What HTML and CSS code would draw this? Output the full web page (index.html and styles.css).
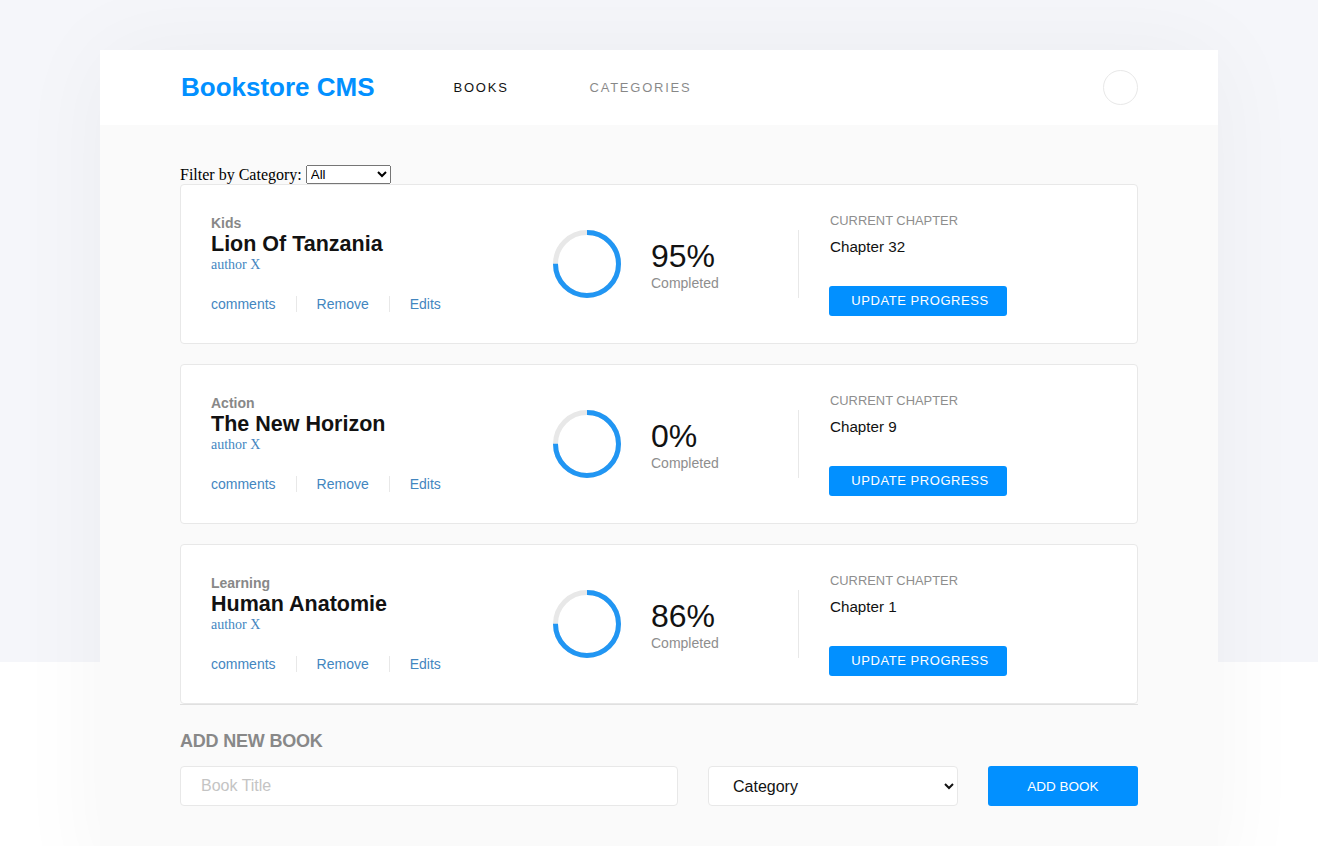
FILE: index.html
```html
<!DOCTYPE html>
<html lang="en">
<head>
<meta charset="utf-8">
<title>Bookstore CMS</title>
<link rel="stylesheet" href="styles.css">
</head>
<body>
<div class="page">
  <div class="panel">
    <header class="header">
      <h1 class="logo">Bookstore CMS</h1>
      <nav class="nav">
        <a class="nav-link active" href="#">BOOKS</a>
        <a class="nav-link" href="#">CATEGORIES</a>
      </nav>
      <div class="avatar"></div>
    </header>

    <main class="content">
      <div class="filter">
        <label class="filter-label" for="filter">Filter by Category:</label>
        <select id="filter" class="filter-select">
          <option>All</option>
          <option>Action</option>
          <option>Kids</option>
          <option>Learning</option>
        </select>
      </div>

      <ul class="book-list">
        <li class="book">
          <div class="book-info">
            <span class="book-category">Kids</span>
            <h2 class="book-title">Lion Of Tanzania</h2>
            <span class="book-author">author X</span>
            <div class="book-actions">
              <a class="action" href="#">comments</a>
              <a class="action" href="#">Remove</a>
              <a class="action" href="#">Edits</a>
            </div>
          </div>
          <div class="book-progress">
            <svg class="ring" width="68" height="68" viewBox="0 0 68 68">
              <circle class="ring-track" cx="34" cy="34" r="31.5"/>
              <circle class="ring-bar" cx="34" cy="34" r="31.5" stroke-dasharray="148.4 197.9"/>
            </svg>
            <div class="progress-text">
              <span class="percent">95%</span>
              <span class="completed">Completed</span>
            </div>
          </div>
          <div class="book-chapter">
            <span class="chapter-label">CURRENT CHAPTER</span>
            <span class="chapter-name">Chapter 32</span>
            <button class="btn btn-update">UPDATE PROGRESS</button>
          </div>
        </li>

        <li class="book">
          <div class="book-info">
            <span class="book-category">Action</span>
            <h2 class="book-title">The New Horizon</h2>
            <span class="book-author">author X</span>
            <div class="book-actions">
              <a class="action" href="#">comments</a>
              <a class="action" href="#">Remove</a>
              <a class="action" href="#">Edits</a>
            </div>
          </div>
          <div class="book-progress">
            <svg class="ring" width="68" height="68" viewBox="0 0 68 68">
              <circle class="ring-track" cx="34" cy="34" r="31.5"/>
              <circle class="ring-bar" cx="34" cy="34" r="31.5" stroke-dasharray="148.4 197.9"/>
            </svg>
            <div class="progress-text">
              <span class="percent">0%</span>
              <span class="completed">Completed</span>
            </div>
          </div>
          <div class="book-chapter">
            <span class="chapter-label">CURRENT CHAPTER</span>
            <span class="chapter-name">Chapter 9</span>
            <button class="btn btn-update">UPDATE PROGRESS</button>
          </div>
        </li>

        <li class="book">
          <div class="book-info">
            <span class="book-category">Learning</span>
            <h2 class="book-title">Human Anatomie</h2>
            <span class="book-author">author X</span>
            <div class="book-actions">
              <a class="action" href="#">comments</a>
              <a class="action" href="#">Remove</a>
              <a class="action" href="#">Edits</a>
            </div>
          </div>
          <div class="book-progress">
            <svg class="ring" width="68" height="68" viewBox="0 0 68 68">
              <circle class="ring-track" cx="34" cy="34" r="31.5"/>
              <circle class="ring-bar" cx="34" cy="34" r="31.5" stroke-dasharray="148.4 197.9"/>
            </svg>
            <div class="progress-text">
              <span class="percent">86%</span>
              <span class="completed">Completed</span>
            </div>
          </div>
          <div class="book-chapter">
            <span class="chapter-label">CURRENT CHAPTER</span>
            <span class="chapter-name">Chapter 1</span>
            <button class="btn btn-update">UPDATE PROGRESS</button>
          </div>
        </li>
      </ul>

      <section class="add-book">
        <h3 class="add-title">ADD NEW BOOK</h3>
        <form class="add-form">
          <input class="field field-title" type="text" placeholder="Book Title">
          <select class="field field-category">
            <option>Category</option>
            <option>Action</option>
            <option>Kids</option>
            <option>Learning</option>
          </select>
          <button class="btn btn-add" type="button">ADD BOOK</button>
        </form>
      </section>
    </main>
  </div>
</div>
</body>
</html>
```

FILE: styles.css
```css
* {
  box-sizing: border-box;
}

html {
  background: #fff;
}

body {
  margin: 0;
  font-family: "Liberation Sans", Arial, sans-serif;
  color: #121212;
  background: linear-gradient(to bottom, #f5f6fa 0, #f5f6fa 662px, #fff 662px) no-repeat;
  min-height: 846px;
}

.page {
  padding-top: 50px;
  overflow: hidden;
  height: 846px;
}

.panel {
  width: 1118px;
  margin: 0 auto;
  background: #fafafa;
  box-shadow: 0 0 90px rgba(0, 0, 0, 0.045);
}

/* Header */
.header {
  height: 75px;
  background: #fff;
  display: flex;
  align-items: center;
  padding: 0 80px;
}

.logo {
  margin: 0;
  font-size: 26px;
  font-weight: 700;
  color: #0290ff;
  padding-left: 1px;
}

.nav {
  display: flex;
  gap: 81px;
  margin-left: 79px;
  flex: 1;
}

.nav-link {
  font-size: 13px;
  letter-spacing: 1.75px;
  text-decoration: none;
  color: #121212;
  opacity: 0.5;
}

.nav-link.active {
  opacity: 1;
}

.avatar {
  width: 35px;
  height: 35px;
  border-radius: 50%;
  border: 1px solid #e8e8e8;
}

/* Content */
.content {
  padding: 40px 80px 80px;
}

.filter {
  display: flex;
  align-items: center;
  height: 19px;
}

.filter-label {
  font-family: "Liberation Serif", "Times New Roman", serif;
  font-size: 16px;
  color: #000;
  margin-right: 4px;
}

.filter-select {
  width: 85px;
  height: 19px;
  font-family: "Liberation Sans", Arial, sans-serif;
  font-size: 13.33px;
  padding: 0;
}

.book-list {
  list-style: none;
  margin: 0;
  padding: 0;
  display: flex;
  flex-direction: column;
  gap: 20px;
}

.book {
  height: 160px;
  background: #fff;
  border: 1px solid #e8e8e8;
  border-radius: 4px;
  display: flex;
  align-items: center;
  padding: 0 30px;
}

.book-info {
  width: 342px;
  display: flex;
  flex-direction: column;
  align-items: flex-start;
}

.book-category {
  font-size: 14px;
  font-weight: 700;
  color: #888;
  line-height: 14px;
}

.book-title {
  margin: 2px 0 0;
  font-size: 21.5px;
  font-weight: 700;
  line-height: 25px;
  color: #121212;
}

.book-author {
  font-family: "Liberation Serif", "Times New Roman", serif;
  font-size: 14px;
  line-height: 16px;
  color: #4386bf;
}

.book-actions {
  display: flex;
  margin-top: 23px;
}

.action {
  font-size: 14px;
  line-height: 16px;
  color: #4386bf;
  text-decoration: none;
  padding: 0 20px;
  border-left: 1px solid #e8e8e8;
}

.action:first-child {
  padding-left: 0;
  border-left: none;
}

.book-progress {
  width: 246px;
  display: flex;
  align-items: center;
  gap: 30px;
  border-right: 1px solid #e8e8e8;
}

.ring {
  display: block;
  transform: rotate(-90deg);
}

.ring-track {
  fill: none;
  stroke: #e8e8e8;
  stroke-width: 5;
}

.ring-bar {
  fill: none;
  stroke: #2196f3;
  stroke-width: 5;
}

.progress-text {
  display: flex;
  flex-direction: column;
}

.percent {
  font-size: 32px;
  line-height: 37px;
  color: #121212;
}

.completed {
  font-size: 14px;
  line-height: 16px;
  color: #8e8e8e;
}

.book-chapter {
  display: flex;
  flex-direction: column;
  align-items: flex-start;
  margin-left: 31px;
}

.chapter-label {
  font-size: 12.9px;
  line-height: 16px;
  color: #8e8e8e;
}

.chapter-name {
  font-size: 15.2px;
  line-height: 18px;
  margin-top: 9px;
  color: #121212;
}

.btn {
  border: none;
  background: #0290ff;
  color: #fff;
  font-family: "Liberation Sans", Arial, sans-serif;
  font-size: 13px;
  border-radius: 3px;
  cursor: pointer;
}

.btn-update {
  width: 178px;
  height: 30px;
  margin-top: 30px;
  margin-left: -1px;
  padding: 0 0 0 4px;
  letter-spacing: 0.55px;
}

/* Add book */
.add-book {
  border-top: 1px solid #e0e0e0;
}

.add-title {
  margin: 26px 0 14px;
  font-size: 18px;
  line-height: 21px;
  font-weight: 700;
  letter-spacing: -0.2px;
  color: #888;
}

.add-form {
  display: flex;
  gap: 30px;
}

.field {
  height: 40px;
  border: 1px solid #e8e8e8;
  border-radius: 4px;
  background: #fff;
  font-family: "Liberation Sans", Arial, sans-serif;
  font-size: 16px;
  color: #121212;
}

.field-title {
  width: 498px;
  padding: 0 20px;
}

.field-title::placeholder {
  color: #c4c4c4;
}

.field-category {
  width: 250px;
  padding: 0 20px;
}

.btn-add {
  width: 150px;
  height: 40px;
  font-size: 13.5px;
}
```
